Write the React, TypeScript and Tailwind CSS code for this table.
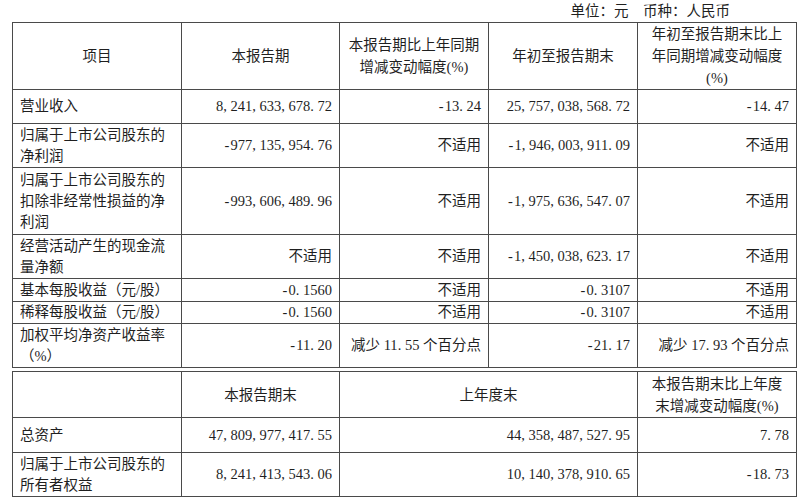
import React from "react";

type Cell = string | string[];

interface Row {
  h: string;
  cells: Cell[];
}

// SimSun-like number: comma, point and minus take half an em, as in the source PDF
function Num({ v }: { v: string }) {
  return (
    <>
      {v.split("").map((c, i) =>
        c === "," || c === "." || c === "-" ? (
          <span key={i} className={`inline-block w-[0.5em] ${c === "-" ? "text-center" : "text-left"}`}>
            {c}
          </span>
        ) : (
          c
        )
      )}
    </>
  );
}

function Lines({ v }: { v: Cell }) {
  const lines = Array.isArray(v) ? v : [v];
  return (
    <>
      {lines.map((l, i) => (
        <div key={i}>
          <Num v={l} />
        </div>
      ))}
    </>
  );
}

const topRows: Row[] = [
  { h: "h-[34px]", cells: ["营业收入", "8,241,633,678.72", "-13.24", "25,757,038,568.72", "-14.47"] },
  {
    h: "h-[44px]",
    cells: [["归属于上市公司股东的", "净利润"], "-977,135,954.76", "不适用", "-1,946,003,911.09", "不适用"],
  },
  {
    h: "h-[67px]",
    cells: [
      ["归属于上市公司股东的", "扣除非经常性损益的净", "利润"],
      "-993,606,489.96",
      "不适用",
      "-1,975,636,547.07",
      "不适用",
    ],
  },
  {
    h: "h-[44px]",
    cells: [["经营活动产生的现金流", "量净额"], "不适用", "不适用", "-1,450,038,623.17", "不适用"],
  },
  { h: "h-[23px]", cells: ["基本每股收益（元/股）", "-0.1560", "不适用", "-0.3107", "不适用"] },
  { h: "h-[22px]", cells: ["稀释每股收益（元/股）", "-0.1560", "不适用", "-0.3107", "不适用"] },
  {
    h: "h-[44px]",
    cells: [["加权平均净资产收益率", "（%）"], "-11.20", "减少 11.55 个百分点", "-21.17", "减少 17.93 个百分点"],
  },
];

const bottomRows: Row[] = [
  { h: "h-[35px]", cells: ["总资产", "47,809,977,417.55", "44,358,487,527.95", "7.78"] },
  {
    h: "h-[44px]",
    cells: [["归属于上市公司股东的", "所有者权益"], "8,241,413,543.06", "10,140,378,910.65", "-18.73"],
  },
];

const td = "border border-[#4a4a4a] px-[7px] align-middle whitespace-nowrap";

export default function App() {
  return (
    <div className="w-[800px] h-[500px] bg-white pl-[12px] text-[14.5px] leading-[21px] text-[#1f1f1f] font-['Liberation_Serif','Noto_Sans_CJK_SC',serif]">
      {/* Unit caption */}
      <div className="h-[22px] flex items-center justify-end pr-[70px]">单位：元　币种：人民币</div>

      {/* Main table */}
      <table className="w-[784px] table-fixed border-collapse">
        <colgroup>
          <col className="w-[169px]" />
          <col className="w-[158px]" />
          <col className="w-[149px]" />
          <col className="w-[149px]" />
          <col className="w-[159px]" />
        </colgroup>
        <thead>
          <tr className="h-[67px] leading-[22px] text-center">
            <td className={td}>项目</td>
            <td className={td}>本报告期</td>
            <td className={td}>
              <Lines v={["本报告期比上年同期", "增减变动幅度(%)"]} />
            </td>
            <td className={td}>年初至报告期末</td>
            <td className={td}>
              <Lines v={["年初至报告期末比上", "年同期增减变动幅度", "(%)"]} />
            </td>
          </tr>
        </thead>
        <tbody>
          {topRows.map((r, i) => (
            <tr key={i} className={r.h}>
              {r.cells.map((c, j) => (
                <td key={j} className={`${td} ${j === 0 ? "text-left" : "text-right"}`}>
                  <Lines v={c} />
                </td>
              ))}
            </tr>
          ))}
        </tbody>
      </table>

      {/* Balance table */}
      <table className="mt-[3px] w-[784px] table-fixed border-collapse">
        <colgroup>
          <col className="w-[169px]" />
          <col className="w-[158px]" />
          <col className="w-[298px]" />
          <col className="w-[159px]" />
        </colgroup>
        <thead>
          <tr className="h-[46px] leading-[22px] text-center">
            <td className={td}></td>
            <td className={td}>本报告期末</td>
            <td className={td}>上年度末</td>
            <td className={td}>
              <Lines v={["本报告期末比上年度", "末增减变动幅度(%)"]} />
            </td>
          </tr>
        </thead>
        <tbody>
          {bottomRows.map((r, i) => (
            <tr key={i} className={r.h}>
              {r.cells.map((c, j) => (
                <td key={j} className={`${td} ${j === 0 ? "text-left" : "text-right"}`}>
                  <Lines v={c} />
                </td>
              ))}
            </tr>
          ))}
        </tbody>
      </table>
    </div>
  );
}
